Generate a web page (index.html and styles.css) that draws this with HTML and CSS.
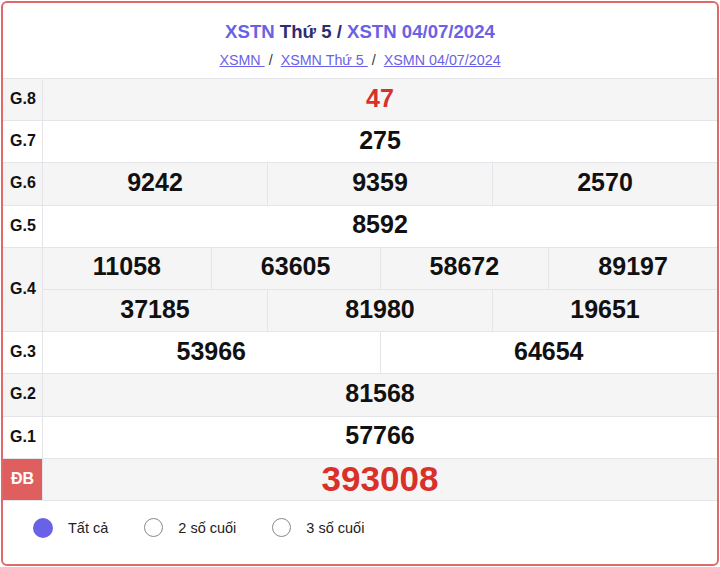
FILE: index.html
```html
<!DOCTYPE html>
<html lang="vi">
<head>
<meta charset="utf-8">
<title>XSTN Thứ 5</title>
<link rel="stylesheet" href="styles.css">
</head>
<body>
<div class="box">
  <div class="head">
    <h2 class="title"><a href="#">XSTN</a> Thứ 5 / <a href="#">XSTN 04/07/2024</a></h2>
    <div class="crumbs"><a href="#">XSMN </a> / <a href="#">XSMN Thứ 5 </a> / <a href="#">XSMN 04/07/2024</a></div>
  </div>
  <div class="grid">
    <div class="lbl alt">G.8</div>
    <div class="c alt s12 red">47</div>

    <div class="lbl">G.7</div>
    <div class="c s12">275</div>

    <div class="lbl alt">G.6</div>
    <div class="c alt s4">9242</div>
    <div class="c alt s4">9359</div>
    <div class="c alt s4">2570</div>

    <div class="lbl">G.5</div>
    <div class="c s12">8592</div>

    <div class="lbl alt r2">G.4</div>
    <div class="c alt s3">11058</div>
    <div class="c alt s3">63605</div>
    <div class="c alt s3">58672</div>
    <div class="c alt s3">89197</div>
    <div class="c alt s4">37185</div>
    <div class="c alt s4">81980</div>
    <div class="c alt s4">19651</div>

    <div class="lbl">G.3</div>
    <div class="c s6">53966</div>
    <div class="c s6">64654</div>

    <div class="lbl alt">G.2</div>
    <div class="c alt s12">81568</div>

    <div class="lbl">G.1</div>
    <div class="c s12">57766</div>

    <div class="lbl db">ĐB</div>
    <div class="c alt s12 red big">393008</div>
  </div>
  <div class="opts">
    <label class="opt"><span class="dot on"></span>Tất cả</label>
    <label class="opt"><span class="dot"></span>2 số cuối</label>
    <label class="opt"><span class="dot"></span>3 số cuối</label>
  </div>
</div>
</body>
</html>
```
FILE: styles.css
```css
html, body {
  margin: 0;
  padding: 0;
  background: #fff;
}
body {
  padding: 1px;
  font-family: "Liberation Sans", Arial, sans-serif;
  color: #111;
}
.box {
  width: 714px;
  height: 561px;
  border: 2px solid #e06a6a;
  border-radius: 6px;
  display: flex;
  flex-direction: column;
  overflow: hidden;
}
.head {
  padding: 18px 0 9px;
  text-align: center;
  display: flex;
  flex-direction: column;
  gap: 8px;
}
.title {
  margin: 0;
  font-size: 18.6px;
  line-height: 22px;
  font-weight: bold;
  color: #2e2c74;
}
.title a {
  color: #6a62e6;
  text-decoration: none;
}
.crumbs {
  font-size: 14.3px;
  line-height: 18px;
  color: #333;
}
.crumbs a {
  color: #6a62e6;
  text-decoration: underline;
  margin: 0 4px;
}
.grid {
  display: grid;
  grid-template-columns: 39px repeat(12, 1fr);
  grid-auto-rows: 41.2px;
  gap: 1px;
  background: #e5e5e9;
  border-top: 1px solid #e5e5e9;
  border-bottom: 1px solid #e5e5e9;
}
.lbl {
  background: #fff;
  font-weight: bold;
  font-size: 16px;
  display: flex;
  align-items: center;
  padding-left: 7px;
  padding-bottom: 1px;
}
.lbl.r2 { grid-row: span 2; }
.lbl.db {
  background: #df5f5f;
  color: #fff;
  padding-left: 8px;
  font-size: 16px;
}
.c {
  background: #fff;
  font-weight: bold;
  font-size: 25px;
  display: flex;
  align-items: center;
  justify-content: center;
  padding-bottom: 3px;
  color: #111;
}
.alt { background: #f5f5f6; }
.s12 { grid-column: span 12; }
.s6 { grid-column: span 6; }
.s4 { grid-column: span 4; }
.s3 { grid-column: span 3; }
.red { color: #d9302a; }
.c.big { font-size: 35px; padding-bottom: 0; }
.opts {
  display: flex;
  align-items: center;
  padding: 17px 0 0 30px;
  gap: 36px;
}
.opt {
  display: flex;
  align-items: center;
  gap: 15px;
  font-size: 14.5px;
  color: #222;
}
.dot {
  width: 19px;
  height: 19px;
  border-radius: 50%;
  border: 1px solid #888;
  box-sizing: border-box;
  background: #fff;
}
.dot.on {
  border: none;
  background: #6a62e6;
  width: 20px;
  height: 20px;
}
```
